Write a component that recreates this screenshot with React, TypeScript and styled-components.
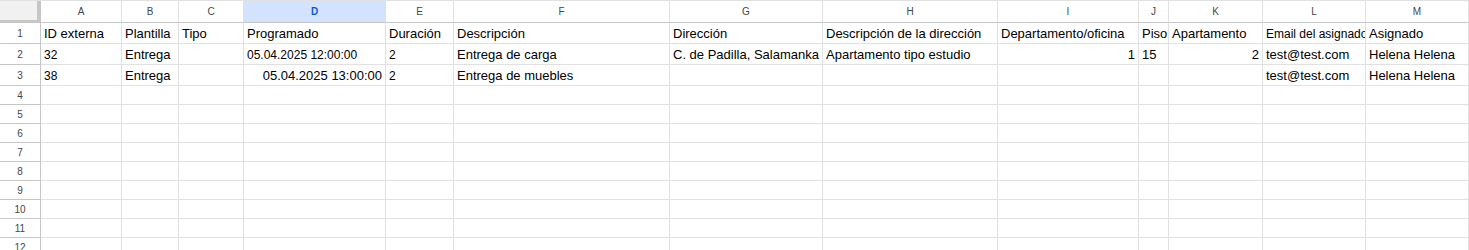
import styled, { createGlobalStyle, css } from "styled-components";

const GlobalStyle = createGlobalStyle`
  html, body {
    margin: 0;
    padding: 0;
    background: #ffffff;
    overflow: hidden;
  }
  body {
    font-family: "Liberation Sans", Arial, sans-serif;
  }
`;

const COLS = [
  { id: "A", w: 81 },
  { id: "B", w: 57 },
  { id: "C", w: 65 },
  { id: "D", w: 142 },
  { id: "E", w: 68 },
  { id: "F", w: 216 },
  { id: "G", w: 153 },
  { id: "H", w: 175 },
  { id: "I", w: 141 },
  { id: "J", w: 30 },
  { id: "K", w: 94 },
  { id: "L", w: 103 },
  { id: "M", w: 103 },
];

type Cell = { v?: string; small?: boolean; right?: boolean };

const DATA: Cell[][] = [
  [
    { v: "ID externa" },
    { v: "Plantilla" },
    { v: "Tipo" },
    { v: "Programado" },
    { v: "Duración" },
    { v: "Descripción" },
    { v: "Dirección" },
    { v: "Descripción de la dirección" },
    { v: "Departamento/oficina" },
    { v: "Piso" },
    { v: "Apartamento" },
    { v: "Email del asignado", small: true },
    { v: "Asignado" },
  ],
  [
    { v: "32", small: true },
    { v: "Entrega" },
    {},
    { v: "05.04.2025 12:00:00", small: true },
    { v: "2", small: true },
    { v: "Entrega de carga" },
    { v: "C. de Padilla, Salamanka" },
    { v: "Apartamento tipo estudio" },
    { v: "1", right: true },
    { v: "15" },
    { v: "2", right: true },
    { v: "test@test.com" },
    { v: "Helena Helena" },
  ],
  [
    { v: "38", small: true },
    { v: "Entrega" },
    {},
    { v: "05.04.2025 13:00:00", right: true },
    { v: "2", small: true },
    { v: "Entrega de muebles" },
    {},
    {},
    {},
    {},
    {},
    { v: "test@test.com" },
    { v: "Helena Helena" },
  ],
];

const TOTAL_ROWS = 12;

const Sheet = styled.div`
  display: grid;
  grid-template-columns: 41px ${COLS.map((c) => `${c.w}px`).join(" ")};
  width: 1469px;
  border-top: 1px solid #e1e1e1;
`;

const Corner = styled.div`
  height: 22px;
  box-sizing: border-box;
  background: #f1f1f1;
  border-right: 4px solid #c4c7c5;
  border-bottom: 3px solid #c4c7c5;
`;

const ColHead = styled.div<{ $selected?: boolean }>`
  height: 22px;
  box-sizing: border-box;
  display: flex;
  align-items: center;
  justify-content: center;
  font-size: 10px;
  color: #444746;
  background: #ffffff;
  border-right: 1px solid #e1e1e1;
  border-bottom: 1px solid #c4c7c5;
  ${(p) =>
    p.$selected &&
    css`
      background: #d3e3fd;
      color: #0b57d0;
      font-weight: bold;
    `}
`;

const RowHead = styled.div<{ $h: number }>`
  height: ${(p) => p.$h}px;
  box-sizing: border-box;
  display: flex;
  align-items: center;
  justify-content: center;
  font-size: 10px;
  color: #444746;
  background: #ffffff;
  border-right: 1px solid #c4c7c5;
  border-bottom: 1px solid #c4c7c5;
`;

const DataCell = styled.div<{ $h: number; $small?: boolean; $right?: boolean }>`
  height: ${(p) => p.$h}px;
  box-sizing: border-box;
  display: flex;
  align-items: center;
  justify-content: ${(p) => (p.$right ? "flex-end" : "flex-start")};
  padding: 1px 3px 0 3px;
  font-size: ${(p) => (p.$small ? 12 : 13)}px;
  color: #000000;
  white-space: nowrap;
  overflow: hidden;
  border-right: 1px solid #e1e1e1;
  border-bottom: 1px solid #e1e1e1;
`;

export default function App() {
  const rows = Array.from({ length: TOTAL_ROWS }, (_, i) => i);
  return (
    <>
      <GlobalStyle />
      <Sheet>
        <Corner />
        {COLS.map((c) => (
          <ColHead key={c.id} $selected={c.id === "D"}>
            {c.id}
          </ColHead>
        ))}
        {rows.map((r) => {
          const h = r < 3 ? 21 : 19;
          const cells = DATA[r] ?? [];
          return [
            <RowHead key={`h${r}`} $h={h}>
              {r + 1}
            </RowHead>,
            ...COLS.map((c, ci) => {
              const cell = cells[ci] ?? {};
              return (
                <DataCell
                  key={`${r}-${c.id}`}
                  $h={h}
                  $small={cell.small}
                  $right={cell.right}
                >
                  {cell.v}
                </DataCell>
              );
            }),
          ];
        })}
      </Sheet>
    </>
  );
}
